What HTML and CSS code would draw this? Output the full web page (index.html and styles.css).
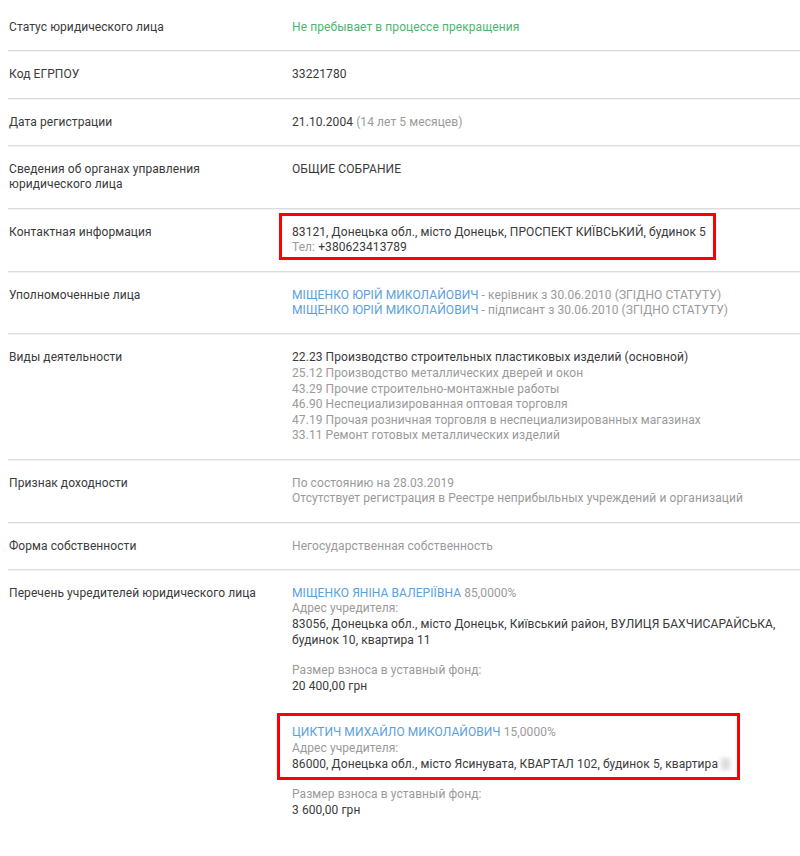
FILE: index.html
```html
<!DOCTYPE html>
<html lang="ru">
<head>
    <meta charset="UTF-8">
    <meta name="viewport" content="width=device-width, initial-scale=1.0">
    <title>Карточка юридического лица</title>
    <link rel="stylesheet" href="styles.css">
</head>
<body>
    <div class="details">
        <div class="row">
            <div class="label">Статус юридического лица</div>
            <div class="value"><span class="status">Не пребывает в процессе прекращения</span></div>
        </div>
        <div class="row">
            <div class="label">Код ЕГРПОУ</div>
            <div class="value">33221780</div>
        </div>
        <div class="row">
            <div class="label">Дата регистрации</div>
            <div class="value">21.10.2004 <span class="muted">(14 лет 5 месяцев)</span></div>
        </div>
        <div class="row">
            <div class="label">Сведения об органах управления юридического лица</div>
            <div class="value">ОБЩИЕ СОБРАНИЕ</div>
        </div>
        <div class="row">
            <div class="label">Контактная информация</div>
            <div class="value">
                <div class="marked contact">
                    83121, Донецька обл., місто Донецьк, ПРОСПЕКТ КИЇВСЬКИЙ, будинок 5<br>
                    <span class="muted">Тел:</span> +380623413789
                </div>
            </div>
        </div>
        <div class="row">
            <div class="label">Уполномоченные лица</div>
            <div class="value">
                <a href="#" class="person">МІЩЕНКО ЮРІЙ МИКОЛАЙОВИЧ</a> <span class="muted">- керівник з 30.06.2010 (ЗГІДНО СТАТУТУ)</span><br>
                <a href="#" class="person">МІЩЕНКО ЮРІЙ МИКОЛАЙОВИЧ</a> <span class="muted">- підписант з 30.06.2010 (ЗГІДНО СТАТУТУ)</span>
            </div>
        </div>
        <div class="row">
            <div class="label">Виды деятельности</div>
            <div class="value">
                22.23 Производство строительных пластиковых изделий (основной)<br>
                <span class="muted">25.12 Производство металлических дверей и окон</span><br>
                <span class="muted">43.29 Прочие строительно-монтажные работы</span><br>
                <span class="muted">46.90 Неспециализированная оптовая торговля</span><br>
                <span class="muted">47.19 Прочая розничная торговля в неспециализированных магазинах</span><br>
                <span class="muted">33.11 Ремонт готовых металлических изделий</span>
            </div>
        </div>
        <div class="row">
            <div class="label">Признак доходности</div>
            <div class="value muted">
                По состоянию на 28.03.2019<br>
                Отсутствует регистрация в Реестре неприбыльных учреждений и организаций
            </div>
        </div>
        <div class="row">
            <div class="label">Форма собственности</div>
            <div class="value muted">Негосударственная собственность</div>
        </div>
        <div class="row">
            <div class="label">Перечень учредителей юридического лица</div>
            <div class="value">
                <div class="founder">
                    <a href="#" class="person">МІЩЕНКО ЯНІНА ВАЛЕРІЇВНА</a> <span class="muted">85,0000%</span><br>
                    <span class="muted">Адрес учредителя:</span><br>
                    83056, Донецька обл., місто Донецьк, Київський район, ВУЛИЦЯ БАХЧИСАРАЙСЬКА, будинок 10, квартира 11
                    <div class="share">
                        <span class="muted">Размер взноса в уставный фонд:</span><br>
                        20 400,00 грн
                    </div>
                </div>
                <div class="founder">
                    <div class="marked holder">
                        <a href="#" class="person">ЦИКТИЧ МИХАЙЛО МИКОЛАЙОВИЧ</a> <span class="muted">15,0000%</span><br>
                        <span class="muted">Адрес учредителя:</span><br>
                        86000, Донецька обл., місто Ясинувата, КВАРТАЛ 102, будинок 5, квартира<span class="blurred"></span>
                    </div>
                    <div class="share">
                        <span class="muted">Размер взноса в уставный фонд:</span><br>
                        3 600,00 грн
                    </div>
                </div>
            </div>
        </div>
    </div>
</body>
</html>
```

FILE: styles.css
```css
* {
    box-sizing: border-box;
    margin: 0;
    padding: 0;
}
body {
    font-family: Roboto, "Noto Sans", Arial, sans-serif;
    font-size: 12px;
    line-height: 15.6px;
    letter-spacing: 0.08px;
    color: #3a3a3a;
    background-color: #ffffff;
}
.details {
    padding-top: 5px;
    margin-left: 8px;
}
.row {
    display: grid;
    grid-template-columns: 284px 1fr;
    padding: 15px 0 14.7px;
    border-bottom: 1px solid #dcdcdc;
    box-shadow: 0 1px 0 #f1f1f1;
    margin-bottom: 1px;
}
.row:last-child {
    border-bottom: none;
    box-shadow: none;
}
.label {
    padding-left: 1px;
    padding-right: 24px;
}
.muted {
    color: #9a9a9a;
}
.status {
    color: #4fb46e;
}
.person {
    color: #5aa0dc;
    text-decoration: none;
}
.marked {
    width: fit-content;
    border: 3px solid #ff0000;
}
.contact {
    margin: -12px 0 -4px -13px;
    padding: 9px 7px 1px 10px;
}
.holder {
    margin: -12px 0 -8px -15px;
    padding: 9px 7px 5px 12px;
}
.blurred {
    display: inline-block;
    width: 9px;
    height: 12px;
    margin-left: 3px;
    vertical-align: -2px;
    background-color: #dcdcdc;
    filter: blur(2px);
}
.share {
    margin-top: 15px;
}
.founder + .founder {
    margin-top: 31px;
}
```
